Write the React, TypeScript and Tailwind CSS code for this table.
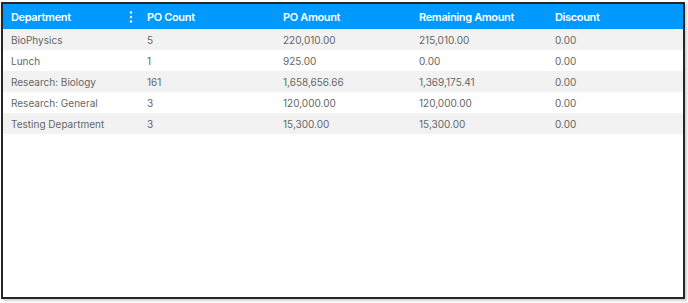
const columns = ['Department', 'PO Count', 'PO Amount', 'Remaining Amount', 'Discount'];

const rows = [
  ['BioPhysics', '5', '220,010.00', '215,010.00', '0.00'],
  ['Lunch', '1', '925.00', '0.00', '0.00'],
  ['Research: Biology', '161', '1,658,656.66', '1,369,175.41', '0.00'],
  ['Research: General', '3', '120,000.00', '120,000.00', '0.00'],
  ['Testing Department', '3', '15,300.00', '15,300.00', '0.00'],
];

function DotsIcon() {
  return (
    <svg width="4" height="14" viewBox="0 0 4 14" className="text-white">
      <circle cx="2" cy="2.5" r="1.2" fill="currentColor" />
      <circle cx="2" cy="7" r="1.2" fill="currentColor" />
      <circle cx="2" cy="11.5" r="1.2" fill="currentColor" />
    </svg>
  );
}

export default function App() {
  return (
    <div className="w-[688px] h-[303px] bg-white font-['Inter',sans-serif] pt-[2px] pl-[1px]">
      <div className="w-[684px] h-[297px] border-2 border-[#262626] shadow-[2px_2px_2px_rgba(0,0,0,0.18)] bg-white">
        <div className="grid grid-cols-5 h-[25px] pt-[1px] bg-[#0099ff] text-white text-[11px] font-semibold items-center">
          {columns.map((col, i) => (
            <div key={col} className="flex items-center justify-between pl-[8px] pr-[6px]">
              <span className="tracking-[-0.35px]">{col}</span>
              {i === 0 && <DotsIcon />}
            </div>
          ))}
        </div>
        {rows.map((row, r) => (
          <div
            key={row[0]}
            className={`grid grid-cols-5 h-[21px] pt-[2px] items-center text-[10px] text-[#666666] ${
              r % 2 === 0 ? 'bg-[#f2f2f2]' : 'bg-white'
            }`}
          >
            {row.map((cell, c) => (
              <div key={c} className="pl-[8px]">
                {cell}
              </div>
            ))}
          </div>
        ))}
      </div>
    </div>
  );
}
